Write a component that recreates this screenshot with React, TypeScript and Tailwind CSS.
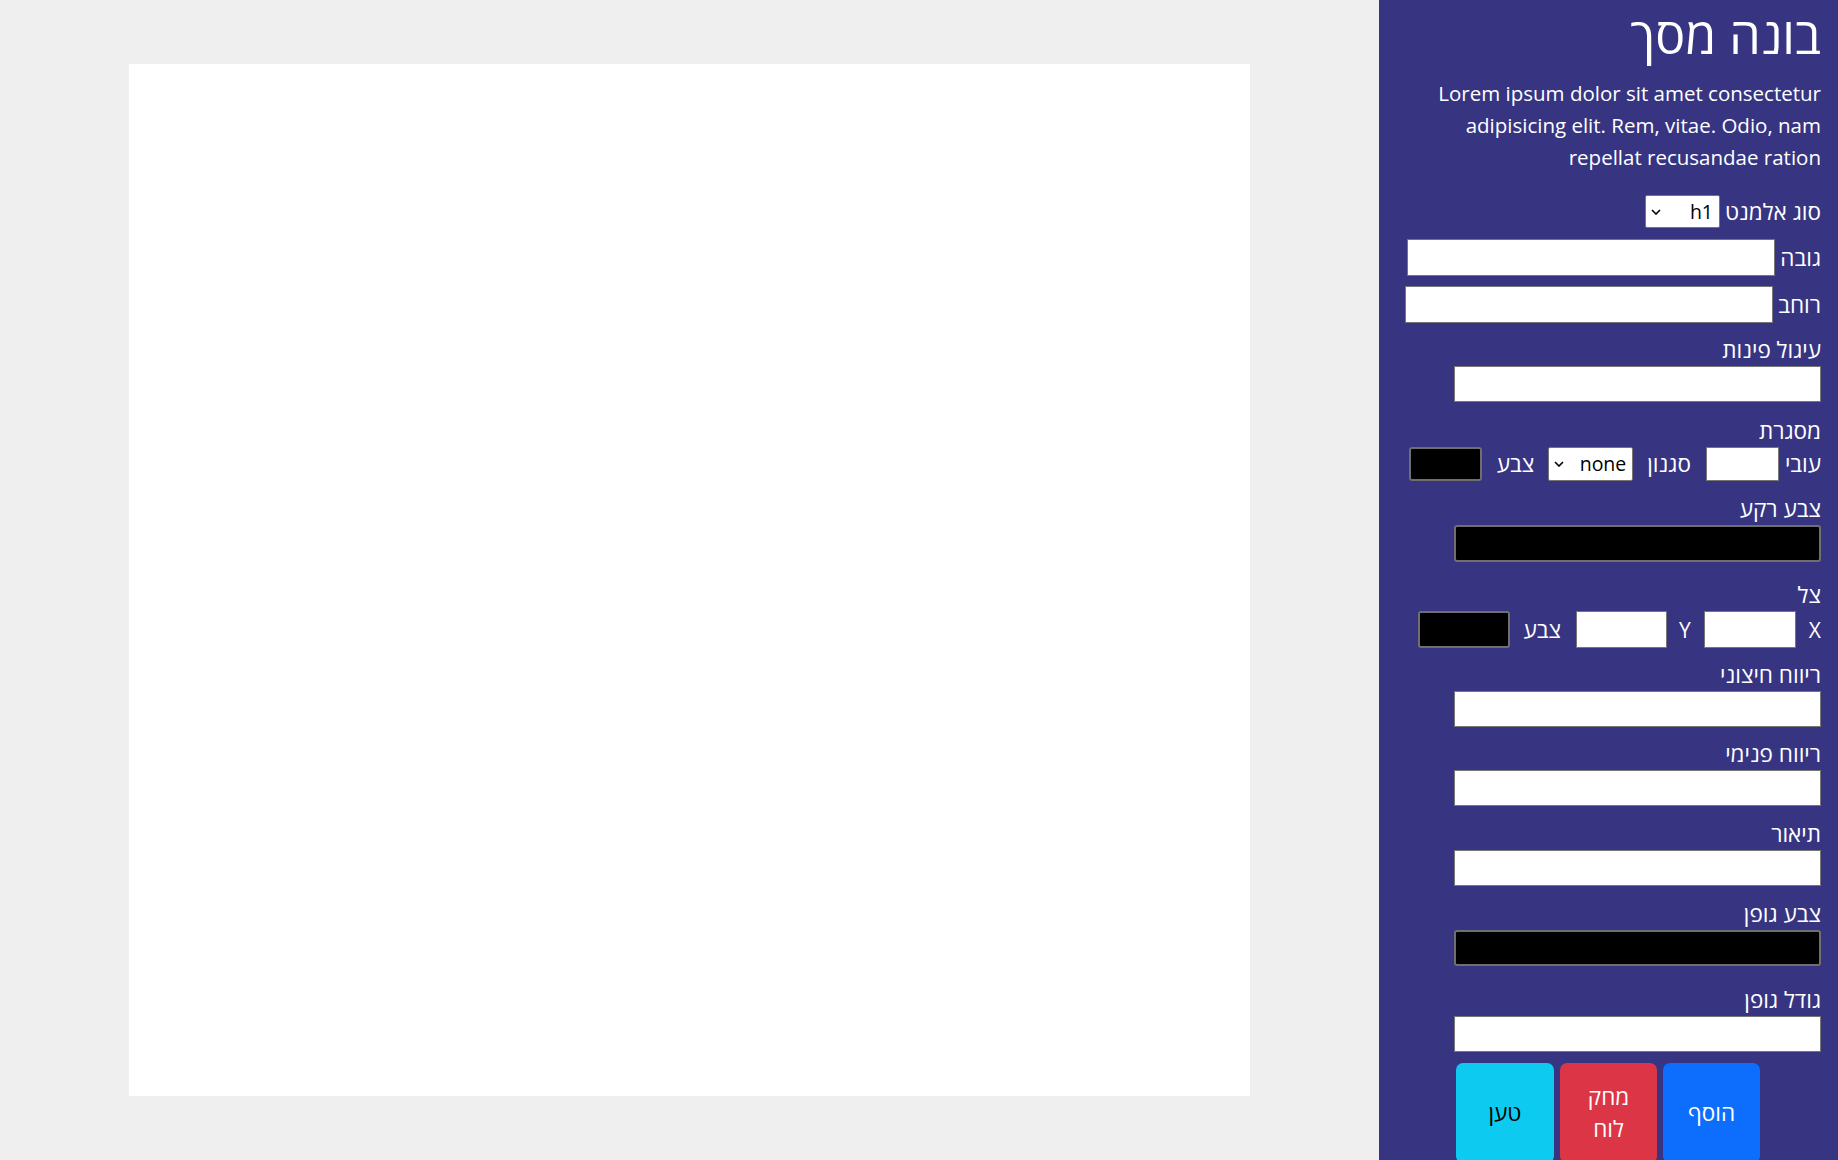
import React from "react";

function Chevron() {
  return (
    <svg width="10" height="6" viewBox="0 0 10 6" className="shrink-0">
      <path d="M1 1 L5 5 L9 1" fill="none" stroke="#000" strokeWidth="1.6" />
    </svg>
  );
}

function Select({ value, className }: { value: string; className: string }) {
  return (
    <div
      className={
        "flex items-center justify-between bg-white border border-[#767676] rounded-[2px] pr-[6px] pl-[5px] text-black text-[19.5px] leading-none " +
        className
      }
    >
      <span>{value}</span>
      <Chevron />
    </div>
  );
}

function Field({ className }: { className: string }) {
  return (
    <input
      type="text"
      className={"block bg-white border border-[#767676] rounded-none outline-none " + className}
    />
  );
}

function Color({ className }: { className: string }) {
  return <div className={"bg-black border-2 border-[#6f6f6f] rounded-[3px] " + className} />;
}

function Label({ text, className = "" }: { text: string; className?: string }) {
  return <div className={"h-[24px] leading-[24px] text-[22.5px] whitespace-nowrap " + className}>{text}</div>;
}

export default function App() {
  return (
    <div className="flex w-full h-[1160px] bg-[#efefef] overflow-hidden font-['Open_Sans','DejaVu_Sans',sans-serif]">
      <main className="flex-1 flex items-center justify-center">
        <div className="w-[1121px] h-[1032px] bg-white" />
      </main>
      <aside
        dir="rtl"
        className="w-[459px] shrink-0 bg-[#373582] text-white pr-[17px] pt-[5px] overflow-hidden"
      >
        <h1 className="text-[50px] leading-[60px] font-normal whitespace-nowrap">בונה מסך</h1>
        <p dir="ltr" className="mt-[12px] text-right text-[20.5px] leading-[32px] font-normal">
          Lorem ipsum dolor sit amet consectetur
          <br />
          adipisicing elit. Rem, vitae. Odio, nam
          <br />
          repellat recusandae ration
        </p>

        <div className="mt-[22px] flex items-center gap-[5px] h-[33px]">
          <Label text="סוג אלמנט" />
          <Select value="h1" className="w-[75px] h-[33px]" />
        </div>

        <div className="mt-[11px] flex items-center gap-[5px]">
          <Label text="גובה" />
          <Field className="w-[368px] h-[37px]" />
        </div>

        <div className="mt-[10px] flex items-center gap-[5px]">
          <Label text="רוחב" />
          <Field className="w-[368px] h-[37px]" />
        </div>

        <Label text="עיגול פינות" className="mt-[15px]" />
        <Field className="mt-[4px] w-[367px] h-[36px]" />

        <Label text="מסגרת" className="mt-[17px]" />
        <div className="mt-[4px] flex items-center h-[34px]">
          <Label text="עובי" />
          <Field className="mr-[6px] w-[73px] h-[34px]" />
          <Label text="סגנון" className="mr-[15px]" />
          <Select value="none" className="mr-[14px] w-[85px] h-[34px]" />
          <Label text="צבע" className="mr-[14px]" />
          <Color className="mr-[15px] w-[73px] h-[34px]" />
        </div>

        <Label text="צבע רקע" className="mt-[16px]" />
        <Color className="mt-[4px] w-[367px] h-[37px]" />

        <Label text="צל" className="mt-[21px]" />
        <div className="mt-[4px] flex items-center h-[37px]">
          <div className="h-[24px] leading-[24px] text-[21px]">X</div>
          <Field className="mr-[13px] w-[92px] h-[37px]" />
          <div className="mr-[13px] h-[24px] leading-[24px] text-[21px]">Y</div>
          <Field className="mr-[12px] w-[91px] h-[37px]" />
          <Label text="צבע" className="mr-[15px]" />
          <Color className="mr-[14px] w-[92px] h-[37px]" />
        </div>

        <Label text="ריווח חיצוני" className="mt-[15px]" />
        <Field className="mt-[4px] w-[367px] h-[36px]" />

        <Label text="ריווח פנימי" className="mt-[15px]" />
        <Field className="mt-[4px] w-[367px] h-[36px]" />

        <Label text="תיאור" className="mt-[16px]" />
        <Field className="mt-[4px] w-[367px] h-[36px]" />

        <Label text="צבע גופן" className="mt-[16px]" />
        <Color className="mt-[4px] w-[367px] h-[36px]" />

        <Label text="גודל גופן" className="mt-[22px]" />
        <Field className="mt-[4px] w-[367px] h-[36px]" />

        <div className="mt-[11px] mr-[61px] flex gap-[6px]">
          <button className="w-[97px] h-[100px] rounded-[7px] bg-[#0d6efd] text-white text-[22.5px] leading-[32px] px-[13px]">
            הוסף
          </button>
          <button className="w-[97px] h-[100px] rounded-[7px] bg-[#dc3545] text-white text-[22.5px] leading-[32px] px-[13px]">
            מחק לוח
          </button>
          <button className="w-[98px] h-[100px] rounded-[7px] bg-[#0dcaf0] text-black text-[22.5px] leading-[32px] px-[13px]">
            טען
          </button>
        </div>
      </aside>
    </div>
  );
}
